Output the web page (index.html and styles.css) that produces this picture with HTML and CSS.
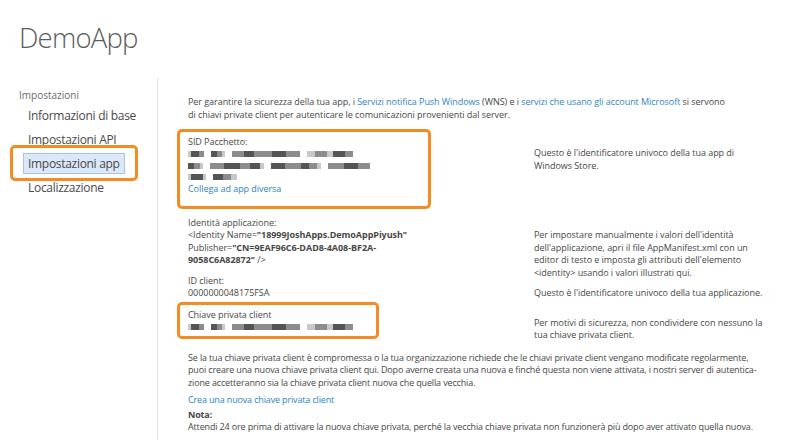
FILE: index.html
```html
<!DOCTYPE html>
<html lang="it">
<head>
<meta charset="utf-8">
<title>DemoApp</title>
<link rel="stylesheet" href="styles.css">
</head>
<body>
<div class="page">
  <header class="top">
    <h1 class="title">DemoApp</h1>
  </header>
  <div class="main">
    <nav class="nav">
      <div class="nav-head">Impostazioni</div>
      <div class="nav-item">Informazioni di base</div>
      <div class="nav-item">Impostazioni API</div>
      <div class="nav-item sel">Impostazioni app</div>
      <div class="nav-item">Localizzazione</div>
    </nav>
    <section class="content">
      <p class="intro">Per garantire la sicurezza della tua app, i <a class="link">Servizi notifica Push Windows</a> (WNS) e i <a class="link">servizi che usano gli account Microsoft</a> si servono<br>di chiavi private client per autenticare le comunicazioni provenienti dal server.</p>

      <div class="grid">
        <div class="cell boxed box-sid">
          <div>SID Pacchetto:</div>
          <div class="redact">
            <span class="rd l" style="width:3px"></span><span class="rd d" style="width:8px"></span><span class="rd m" style="width:5px"></span><span class="sp"></span><span class="rd d" style="width:6px"></span><span class="rd m" style="width:5px"></span><span class="rd l" style="width:3px"></span><span class="sp"></span><span class="rd m" style="width:12px"></span><span class="rd d" style="width:10px"></span><span class="rd m" style="width:18px"></span><span class="rd d" style="width:14px"></span><span class="rd m" style="width:14px"></span><span class="sp"></span><span class="rd l" style="width:8px"></span><span class="rd m" style="width:12px"></span><span class="rd l" style="width:6px"></span><span class="rd d" style="width:12px"></span><span class="rd m" style="width:8px"></span>
          </div>
          <div class="redact">
            <span class="rd d" style="width:6px"></span><span class="rd m" style="width:6px"></span><span class="rd l" style="width:3px"></span><span class="sp"></span><span class="rd m" style="width:14px"></span><span class="rd d" style="width:16px"></span><span class="rd m" style="width:10px"></span><span class="rd d" style="width:10px"></span><span class="rd l" style="width:4px"></span><span class="sp"></span><span class="rd d" style="width:14px"></span><span class="rd m" style="width:16px"></span><span class="rd d" style="width:8px"></span><span class="rd m" style="width:8px"></span><span class="rd l" style="width:4px"></span><span class="sp"></span><span class="rd m" style="width:16px"></span><span class="rd d" style="width:14px"></span><span class="rd m" style="width:12px"></span>
          </div>
          <div class="redact">
            <span class="rd l" style="width:3px"></span><span class="rd d" style="width:12px"></span><span class="rd l" style="width:3px"></span><span class="sp"></span><span class="rd d" style="width:10px"></span><span class="rd m" style="width:8px"></span><span class="rd l" style="width:6px"></span>
          </div>
          <div><a class="link">Collega ad app diversa</a></div>
        </div>
        <div class="cell note note-1">Questo è l'identificatore univoco della tua app di<br>Windows Store.</div>

        <div class="cell plain row-identity">
          <div>Identità applicazione:</div>
          <div>&lt;Identity Name=<b>"18999JoshApps.DemoAppPiyush"</b></div>
          <div>Publisher=<b>"CN=9EAF96C6-DAD8-4A08-BF2A-</b></div>
          <div><b>9058C6A82872"</b> /&gt;</div>
        </div>
        <div class="cell note note-2">Per impostare manualmente i valori dell'identità<br>dell'applicazione, apri il file AppManifest.xml con un<br>editor di testo e imposta gli attributi dell'elemento<br>&lt;identity&gt; usando i valori illustrati qui.</div>

        <div class="cell plain row-client">
          <div>ID client:</div>
          <div>0000000048175FSA</div>
        </div>
        <div class="cell note note-3">Questo è l'identificatore univoco della tua applicazione.</div>

        <div class="cell boxed box-key">
          <div>Chiave privata client</div>
          <div class="redact">
            <span class="rd l" style="width:3px"></span><span class="rd d" style="width:8px"></span><span class="rd m" style="width:5px"></span><span class="sp"></span><span class="rd d" style="width:6px"></span><span class="rd m" style="width:5px"></span><span class="rd l" style="width:3px"></span><span class="sp"></span><span class="rd m" style="width:12px"></span><span class="rd d" style="width:10px"></span><span class="rd m" style="width:18px"></span><span class="rd d" style="width:14px"></span><span class="rd m" style="width:14px"></span><span class="sp"></span><span class="rd l" style="width:8px"></span><span class="rd m" style="width:12px"></span><span class="rd l" style="width:6px"></span><span class="rd d" style="width:12px"></span><span class="rd m" style="width:8px"></span>
          </div>
        </div>
        <div class="cell note note-4">Per motivi di sicurezza, non condividere con nessuno la<br>tua chiave privata client.</div>
      </div>

      <p class="para">Se la tua chiave privata client è compromessa o la tua organizzazione richiede che le chiavi private client vengano modificate regolarmente,<br>puoi creare una nuova chiave privata client qui. Dopo averne creata una nuova e finché questa non viene attivata, i nostri server di autentica-<br>zione accetteranno sia la chiave privata client nuova che quella vecchia.</p>
      <p class="para link-para"><a class="link">Crea una nuova chiave privata client</a></p>
      <p class="para nota"><b>Nota:</b><br>Attendi 24 ore prima di attivare la nuova chiave privata, perché la vecchia chiave privata non funzionerà più dopo aver attivato quella nuova.</p>
    </section>
  </div>
</div>
</body>
</html>
```
FILE: styles.css
```css
html, body {
  margin: 0;
  padding: 0;
  background: #ffffff;
}
body {
  font-family: "Open Sans", "Noto Sans", sans-serif;
  color: #474747;
  width: 800px;
  height: 440px;
  overflow: hidden;
}
.top {
  height: 78px;
  padding-left: 19px;
  box-sizing: border-box;
}
.title {
  margin: 0;
  padding-top: 18px;
  font-size: 27.5px;
  font-weight: 300;
  line-height: 40px;
  color: #5c5c5c;
  letter-spacing: -0.8px;
}
.main {
  display: flex;
  height: 362px;
}
.nav {
  width: 138px;
  padding-left: 19px;
  border-right: 1px solid #e2e2e2;
  padding-top: 11px;
  flex-shrink: 0;
}
.nav-head {
  font-size: 10px;
  line-height: 13px;
  color: #6a6a6a;
  margin-bottom: 3px;
}
.nav-item {
  display: table;
  position: relative;
  font-size: 12px;
  line-height: 19px;
  padding: 0 4px;
  margin-left: 4px;
  margin-bottom: 3px;
  border: 1px solid transparent;
  color: #4a4a4a;
  letter-spacing: -0.3px;
}
.nav-item.sel {
  background: #dbe8f8;
  border-color: #a7c3e6;
}
.nav-item.sel::after {
  content: "";
  position: absolute;
  left: -14px;
  right: -14px;
  top: -9px;
  bottom: -8px;
  border: 3px solid #f48b23;
  border-radius: 5px;
}
.content {
  padding-left: 19px;
  padding-top: 18px;
  font-size: 9px;
  line-height: 12.5px;
  letter-spacing: -0.05px;
}
.intro {
  margin: 0 0 8px 0;
  padding-left: 11px;
  white-space: nowrap;
}
.link {
  color: #2d86bd;
  text-decoration: none;
}
.grid {
  display: grid;
  grid-template-columns: 357px 262px;
  align-items: start;
}
.cell {
  white-space: nowrap;
}
.plain {
  padding-left: 11px;
}
.boxed {
  border: 3px solid #f48b23;
  border-radius: 5px;
  padding: 4px 8px;
  box-sizing: border-box;
}
.box-sid {
  width: 254px;
  padding-bottom: 10px;
}
.note-1 {
  margin-top: 18px;
}
.row-identity {
  margin-top: 8px;
}
.note-2 {
  margin-top: 20.5px;
  margin-bottom: -12.5px;
}
.row-client {
  margin-top: 8px;
}
.note-3 {
  margin-top: 20.5px;
}
.box-key {
  width: 202px;
  padding-bottom: 3px;
  margin-top: 2px;
}
.note-4 {
  margin-top: 17px;
  margin-bottom: -17px;
}
.redact {
  display: flex;
  align-items: center;
  height: 11.5px;
}
.rd {
  display: inline-block;
  height: 6px;
  filter: blur(0.6px);
}
.rd.d { background: #555555; }
.rd.m { background: #8c8c8c; }
.rd.l { background: #c8c8c8; }
.sp {
  display: inline-block;
  width: 7px;
}
.para {
  margin: 13px 0 0 0;
  padding-left: 11px;
  white-space: nowrap;
  letter-spacing: -0.15px;
}
.para.link-para {
  margin-top: 4.5px;
}
.para.nota {
  margin-top: 2.5px;
  line-height: 12px;
}
```
